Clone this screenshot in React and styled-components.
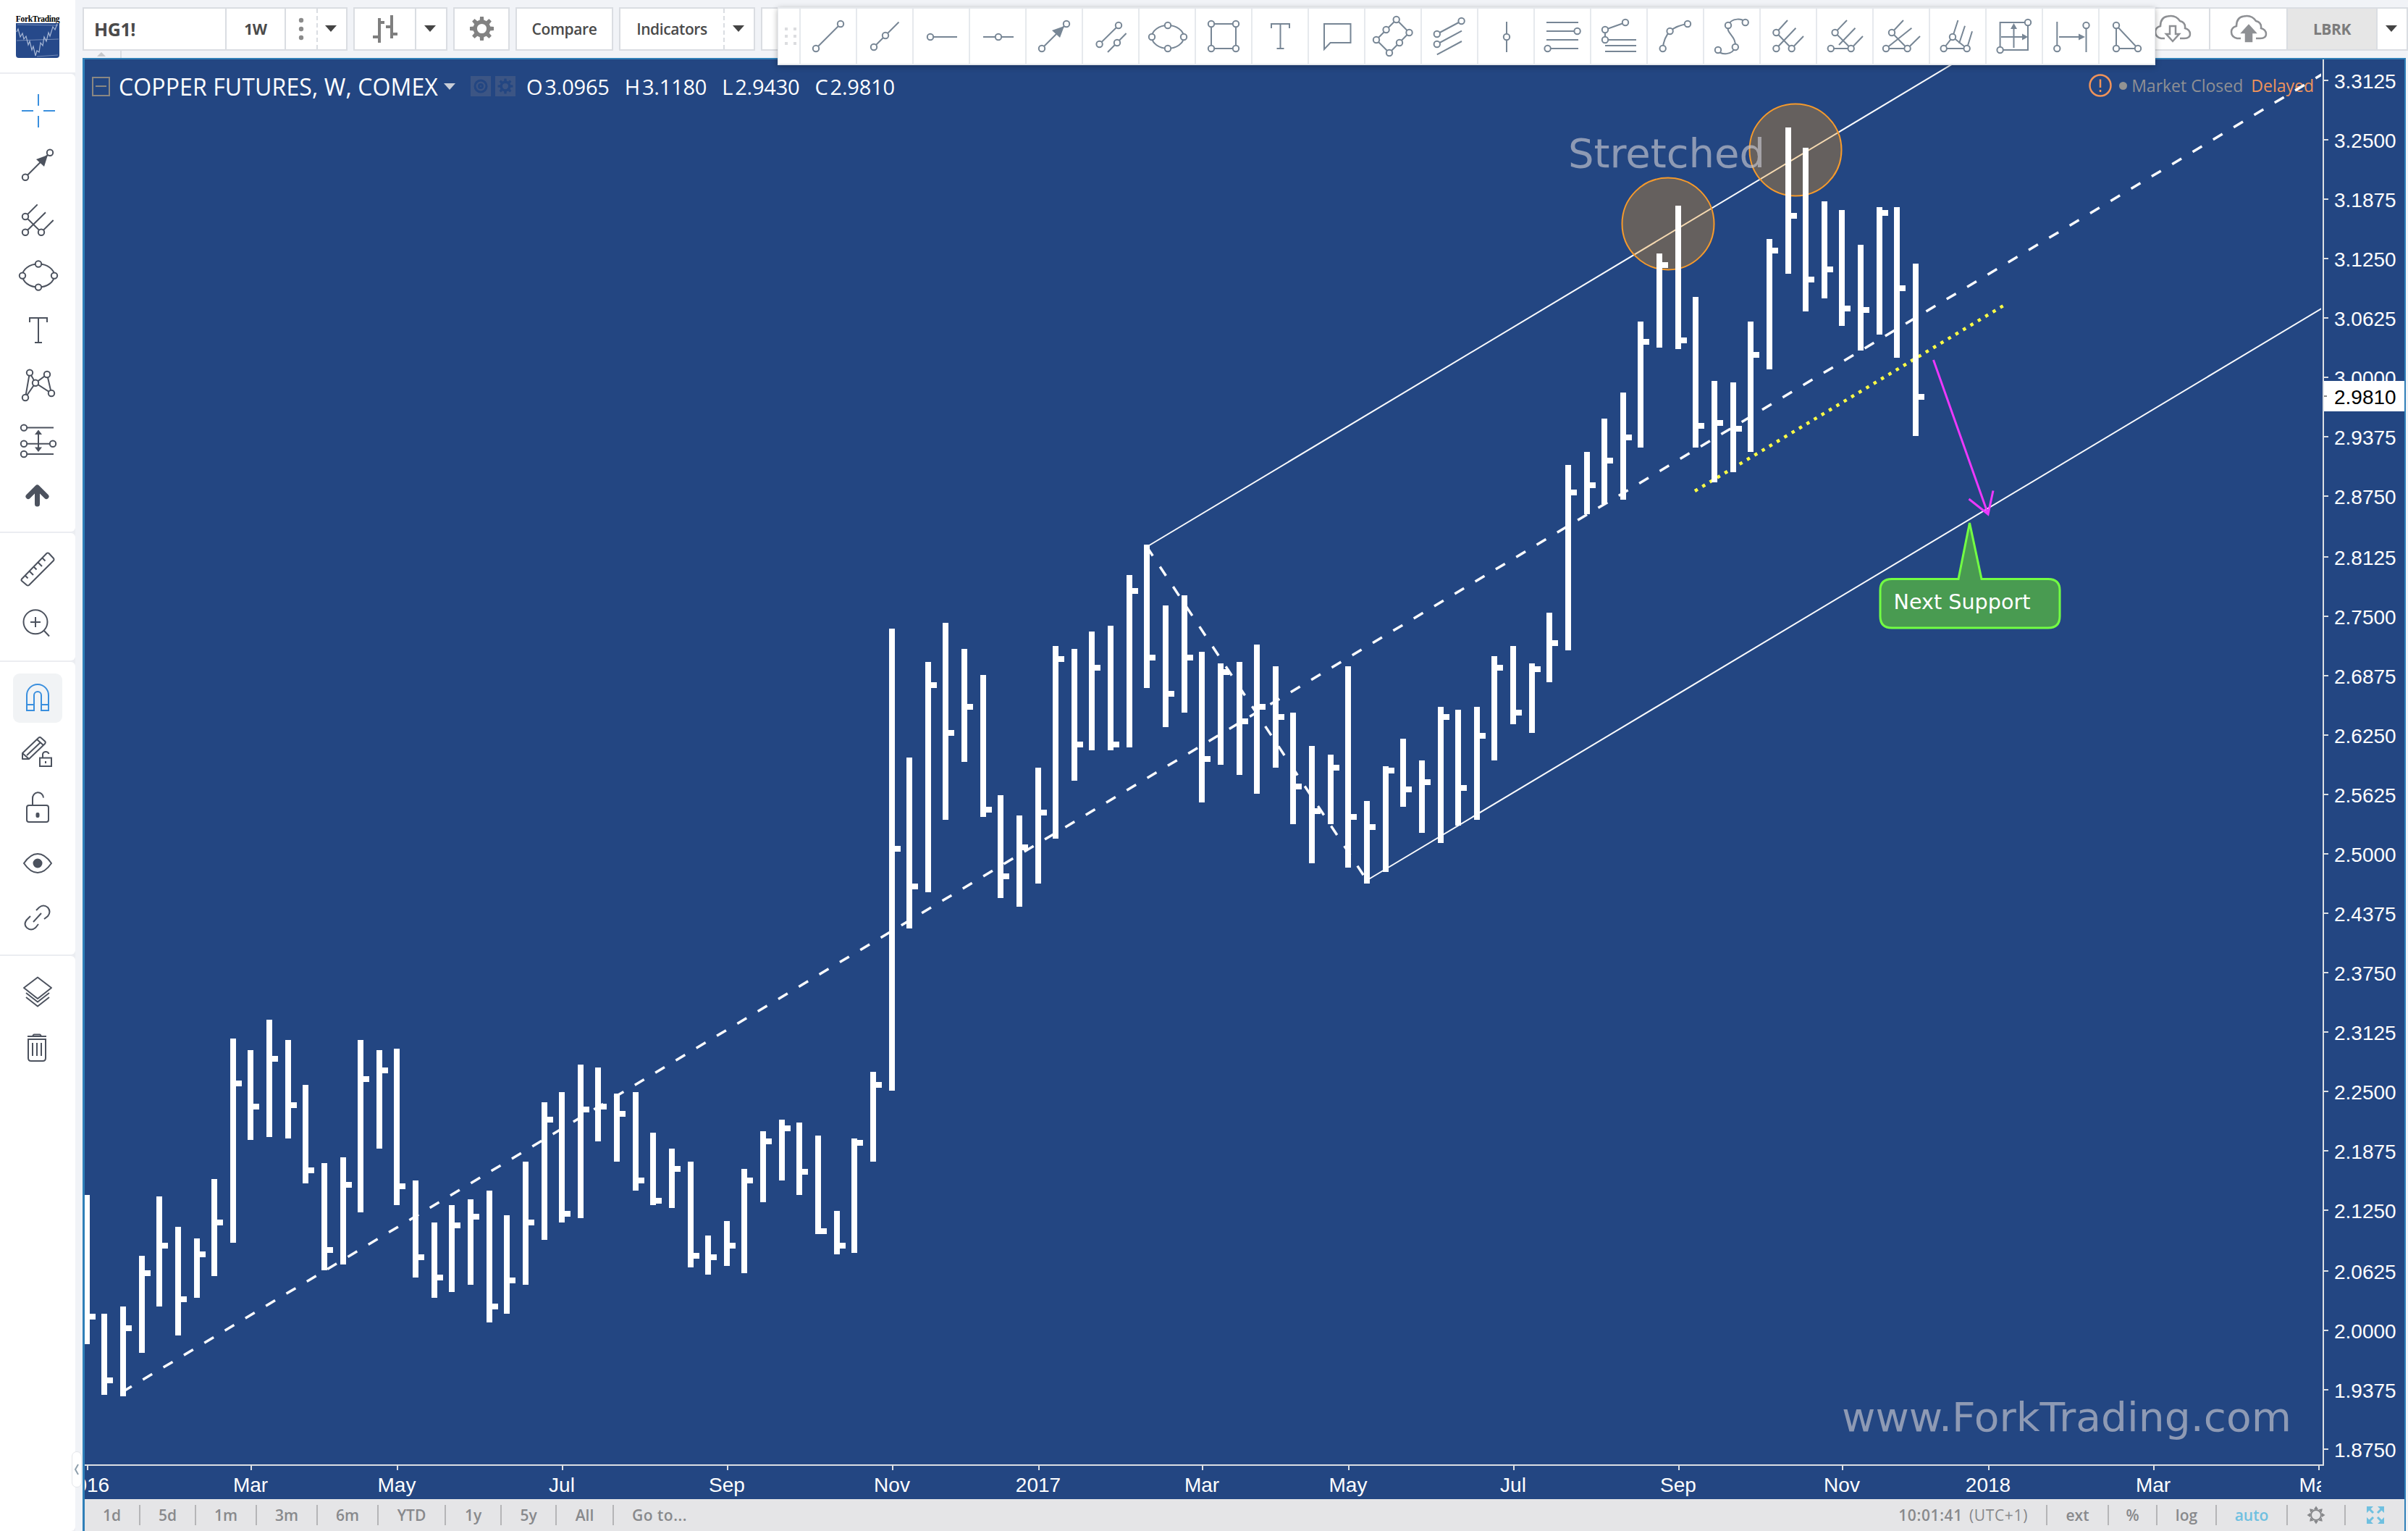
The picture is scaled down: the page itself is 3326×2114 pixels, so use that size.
import React from "react";
import styled, { createGlobalStyle } from "styled-components";

const GlobalStyle = createGlobalStyle`
  * {
    box-sizing: border-box;
  }
  body {
    margin: 0;
    background: #f1f3f7;
    font-family: "Open Sans", "Noto Sans", sans-serif;
    overflow: hidden;
  }
`;

// [top, bottom, close] of every weekly bar, in chart units
const BARS = [
  [1650, 1856, 1818], [1814, 1926, 1906], [1804, 1928, 1834], [1734, 1868, 1758],
  [1652, 1804, 1720], [1694, 1844, 1794], [1710, 1792, 1732], [1628, 1762, 1688],
  [1434, 1716, 1496], [1450, 1574, 1528], [1408, 1570, 1462], [1436, 1572, 1526],
  [1498, 1634, 1616], [1606, 1754, 1726], [1598, 1746, 1636], [1436, 1674, 1490],
  [1450, 1586, 1478], [1448, 1664, 1638], [1630, 1764, 1736], [1688, 1792, 1764],
  [1664, 1784, 1692], [1656, 1774, 1680], [1644, 1826, 1804], [1678, 1814, 1768],
  [1604, 1774, 1688], [1522, 1712, 1546], [1508, 1688, 1676], [1470, 1682, 1532],
  [1474, 1576, 1528], [1510, 1604, 1538], [1508, 1644, 1630], [1564, 1664, 1658],
  [1586, 1668, 1614], [1604, 1750, 1734], [1706, 1760, 1736], [1686, 1748, 1720],
  [1614, 1758, 1630], [1562, 1660, 1576], [1546, 1630, 1558], [1550, 1650, 1618],
  [1568, 1704, 1700], [1672, 1732, 1720], [1572, 1730, 1578], [1480, 1604, 1498],
  [868, 1506, 1172], [1046, 1282, 1224], [914, 1232, 946], [860, 1132, 1012],
  [896, 1052, 976], [932, 1128, 1118], [1098, 1240, 1210], [1126, 1252, 1170],
  [1060, 1220, 1122], [892, 1158, 910], [896, 1078, 1028], [872, 1036, 922],
  [864, 1036, 1028], [794, 1032, 816], [752, 950, 908], [836, 1004, 958],
  [822, 984, 908], [900, 1108, 1048], [916, 1056, 928], [914, 1070, 996],
  [890, 1096, 976], [920, 1060, 990], [984, 1138, 1086], [1030, 1192, 1120],
  [1042, 1138, 1060], [920, 1198, 1128], [1106, 1220, 1142], [1058, 1204, 1064],
  [1020, 1114, 1090], [1050, 1150, 1080], [976, 1164, 990], [980, 1140, 1088],
  [976, 1132, 1016], [906, 1050, 922], [892, 1000, 984], [916, 1012, 924],
  [846, 942, 888], [642, 898, 680], [624, 710, 670], [578, 696, 636],
  [542, 690, 604], [444, 618, 472], [350, 480, 366], [284, 482, 470],
  [410, 618, 588], [526, 666, 584], [528, 652, 592], [444, 624, 490],
  [330, 510, 346], [176, 378, 298], [204, 430, 386], [278, 412, 372],
  [290, 450, 426], [338, 484, 428], [286, 462, 294], [286, 494, 398],
  [364, 602, 548],
];

const MONTHS = [
  [0, "2016"], [9, "Mar"], [17, "May"], [26, "Jul"], [35, "Sep"], [44, "Nov"],
  [52, "2017"], [61, "Mar"], [69, "May"], [78, "Jul"], [87, "Sep"], [96, "Nov"],
  [104, "2018"], [113, "Mar"], [122, "May"],
];

const PRICES = Array.from({ length: 24 }, (_, i) => (3.3125 - i * 0.0625).toFixed(4));

const barX = (i) => Math.round((119.45 + i * 25.2645) / 2) * 2;
const priceY = (i) => 111 + 2 * Math.round(i * 41.085 - 0.14);

/* ---------- icons ---------- */

// stroke colour of the rings follows the parent icon
const Dots = ({ at, r = 4.2 }) =>
  at.map(([x, y]) => <circle key={`${x}-${y}`} cx={x} cy={y} r={r} fill="#fff" />);

// Drawing tools of the floating bar, each on a 76x76 grid
const FAVORITES = [
  { d: "M21 55L55 21", at: [[21, 55], [55, 21]] },
  { d: "M23 53L57.500 18.500", at: [[23, 53], [39, 37]] },
  { d: "M23 39H60", at: [[23, 39]] },
  { d: "M18 39H60", at: [[39, 39]] },
  { d: "M21 55L55 21", solid: "M52 24L35 30L46 40Z", at: [[21, 55], [55, 21]] },
  { d: "M22.600 49L49 23M34 60L59.600 34", at: [[22.6, 49], [49, 23], [47, 47]] },
  { d: "M17 39A22 16 0 0 1 61 39A22 16 0 0 1 17 39", at: [[39, 23], [17, 39], [61, 39], [39, 55]] },
  { d: "M21 21H55V55H21Z", at: [[21, 21], [55, 21], [21, 55], [55, 55]] },
  { d: "M26 27V21H51V27M38.500 21V55M33.500 55H43.500", at: [] },
  { d: "M21 21H57.500V47H29.500L21 56Z", at: [] },
  { d: "M42.700 15L15 43L33 61L60.500 33Z", at: [[42.7, 15], [28.6, 29], [60.5, 33], [15, 43], [47, 47], [33, 61]] },
  { d: "M20.800 35L54.600 17M20.800 49L55 30.700M20.800 63.300L55 45", at: [[54.6, 17], [20.8, 35], [20.8, 49]] },
  { d: "M39 18V60", at: [[39, 39]] },
  { d: "M16 19H60M16 31H58M16 43H60M18 55H60", at: [[58.6, 31], [17.6, 55]] },
  { d: "M47 19L19 29V43H62M19 51H62M19 59H62", at: [[19, 29], [47, 19], [19, 43]] },
  { d: "M20.700 55Q22 40 30.600 31Q40 23 55 21", at: [[20.7, 55], [30.6, 31], [55, 21]] },
  { d: "M56.700 19C54 13 37 12 33 23C29 34 45 38 42.800 53C39 64 23 65 19 57", at: [[56.7, 19], [33, 23], [42.8, 53], [19, 57]] },
  { d: "M37 16L21.400 33L42.700 55L59 38M21.400 55L48.400 26.700", at: [[21.4, 33], [21.4, 55], [42.7, 55]] },
  { d: "M41 16L24.600 33L46.700 55L63 38M18.800 55H46.700M30 50L52.500 26.700", at: [[24.6, 33], [18.8, 55], [46.7, 55]] },
  { d: "M41 16L25 33L46.600 55L64 38M46.600 55H17L52.400 26.700", at: [[25, 33], [17, 55], [46.6, 55]] },
  { d: "M38.400 16L31 39L18.700 55H50.700L58 31.300M31 39L50.700 55M40 48L48 23.700", at: [[31, 39], [18.7, 55], [50.7, 55]] },
  { d: "M18.600 19H57V57H18.600ZM37.500 54V24M20 39H52", solid: "M37.500 20L42 28H33ZM57 39L49 34.500V43.500Z", at: [[57, 19], [18.6, 57]] },
  { d: "M19.300 18V55M59.500 23V60M22 39H52", solid: "M58 39L49 34.500V43.500Z", at: [[19.3, 55], [59.5, 23]] },
  { d: "M23 23V55H53Z", at: [[23, 23], [23, 55], [53, 55]] },
];

const ToolIcon = ({ d, solid, at }) => (
  <svg width="76" height="76" fill="none" stroke="#778695" strokeWidth="2">
    <path d={d} />
    {solid && <path d={solid} fill="#778695" stroke="none" />}
    <Dots at={at} />
  </svg>
);

// Sidebar glyphs use the full 104x76 slot
const SIDEBAR = [
  [
    <path key="cross" stroke="#3a8fde" d="M53 15V31M53 45V61M30 38H46M60 38H76" />,
    <g key="arrow">
      <path d="M35 53.700L69 19.700" />
      <path d="M66 23L50 29L61 39Z" fill="#4c525e" stroke="none" />
      <Dots at={[[35, 53.7], [69, 19.7]]} />
    </g>,
    <g key="fork">
      <path d="M51.700 15.400L35 32L57 53.700L73.700 37M35 53.700L63 26.300" />
      <Dots at={[[35, 32], [35, 53.7], [57, 53.7]]} />
    </g>,
    <g key="ellipse">
      <ellipse cx="53" cy="37.600" rx="22" ry="16" />
      <Dots at={[[53, 21.5], [31, 37.6], [75, 37.6], [53, 53.6]]} />
    </g>,
    <path key="text" d="M41 26V20H65V26M53 20V54M48 54H58" />,
    <g key="pattern">
      <path d="M41 19.600L35 54L49 33.800L65 22L71 48L49 33.800Z" />
      <Dots at={[[41, 19.6], [65, 22], [49, 33.8], [35, 54], [71, 48]]} />
    </g>,
    <g key="forecast">
      <path d="M33 19.600H74M33 41.800H73M33 56H74M53 26V50" />
      <path d="M53 22.500L58 29H48ZM53 53L58 46.500H48Z" fill="#4c525e" stroke="none" />
      <Dots at={[[33, 19.6], [33, 41.8], [73, 41.8], [33, 56]]} />
    </g>,
    <path key="up" strokeWidth="7" strokeLinecap="round" strokeLinejoin="round" d="M39 38.500L51.500 26L64 38.500M51.500 28V49" fill="none" />,
  ],
  [
    <path key="ruler" strokeLinejoin="round" d="M30 51.500L64.500 16Q66 15 67.500 16L74 23Q75 24.500 74 26L40 60Q38.500 61 37 60L30 54Q29 53 30 51.500ZM35 47L38.500 50.500M41 41L46 46M47 35L50.500 38.500M53 29L58 34M59 23L62.500 26.500" />,
    <g key="zoom">
      <circle cx="49" cy="34.800" r="16.500" />
      <path d="M61 47L68 54.500M49 28V42M42 35H56" />
    </g>,
  ],
  [
    <g key="magnet" stroke="#3a8fde">
      <rect x="18" y="4" width="68" height="68" rx="9" fill="#f1f3f5" stroke="none" />
      <path d="M37 55V34A15 15 0 0 1 67 34V55H57V34A5 5 0 0 0 47 34V55ZM37 47H47M57 47H67" />
    </g>,
    <g key="pencil">
      <path strokeLinejoin="round" d="M31 38L53 17Q55 15 57 17L62 21.500Q63.500 23 62 25L40 46H31ZM31 38L40 46M51 19L60 27M37 41L56 23" />
      <path d="M55 44.500H71V56H55ZM59 44V39A4.500 4.500 0 0 1 67.500 39M63 49V52" />
    </g>,
    <g key="lock">
      <rect x="37" y="34" width="30" height="23" rx="3" />
      <path d="M45 34V25A7.500 8 0 0 1 60 23.500" />
      <rect x="50.500" y="45" width="3" height="5" rx="1" fill="#4c525e" />
    </g>,
    <g key="eye">
      <path d="M33 38Q42 25 52 25Q62 25 71 38Q62 51 52 51Q42 51 33 38Z" />
      <circle cx="52" cy="38" r="5.500" fill="#4c525e" />
    </g>,
    <path key="link" d="M50 27L54 23Q60 18 66 23Q71 29 66 35L61 39M42 35L37 40Q32 46 37 51Q43 56 49 51L53 46M46 43L57 31" />,
  ],
  [
    <path key="layers" strokeLinejoin="round" d="M52 17.500L71 32L52 47L33 32ZM36 39L52 51.500L68 39M36 45L52 57.500L68 45" />,
    <path key="trash" d="M38 23H64M39 27H63V53Q63 57 59 57H43Q39 57 39 53ZM45 32V50M51 32V50M57 32V50M45 22L47 20.500H55L57 22" />,
  ],
];

const Gear = ({ size, color }) => (
  <svg width={size} height={size} viewBox="-18 -18 36 36" fill="none" stroke={color}>
    <circle r="9.500" strokeWidth="5.500" />
    {[0, 45, 90, 135, 180, 225, 270, 315].map((a) => (
      <path key={a} d="M-3 -11.500L-2.500 -17H2.500L3 -11.500Z" fill={color} stroke="none" transform={`rotate(${a})`} />
    ))}
  </svg>
);

const Sun = () => (
  <svg width="26" height="26" viewBox="-13 -13 26 26" fill="none" stroke="#86878a" strokeWidth="2">
    <circle r="7" />
    {[0, 45, 90, 135, 180, 225, 270, 315].map((a) => (
      <path key={a} d="M-3 -8L0 -12.500L3 -8Z" fill="#86878a" stroke="none" transform={`rotate(${a})`} />
    ))}
  </svg>
);

const Cloud = ({ up }) => (
  <svg width="52" height="40" fill="none" stroke="#8e9094" strokeWidth="2.500">
    <path d="M15 33H10Q2 31 2 24Q2 18 9 16Q9 4 19 2.500Q30 0 36 9Q44 11 43 19Q50 21 50 27Q50 33 42 33H36" />
    {up ? (
      <path d="M26 15L35 25H30V37H22V25H17Z" fill="#8e9094" />
    ) : (
      <path d="M22 16H30V27H35L26 37L17 27H22Z" />
    )}
  </svg>
);

const Caret = styled.i`
  width: 0;
  height: 0;
  margin-right: 3px;
  border: 8px solid transparent;
  border-top: 9px solid ${({ color }) => color || "#444"};
  border-bottom: 0;
`;

/* ---------- chart ---------- */

const Chart = () => (
  <Plot viewBox="117 82 3204 1988">
    <defs>
      <clipPath id="pane">
        <rect x="117" y="82" width="3089" height="1988" />
      </clipPath>
    </defs>

    <g clipPath="url(#pane)">
      <g stroke="#fafbfd" strokeWidth="2" fill="none">
        <path d="M1584 755L2714 78" />
        <path d="M1888 1215.500L3210 424" />
        <path d="M169 1922L3210 101" strokeWidth="3.500" strokeDasharray="15 18" />
        <path d="M1584 755L1888 1215.500" strokeWidth="3.500" strokeDasharray="15 18" />
      </g>
      <path d="M2341 678L2768 421.500" stroke="#ffff45" strokeWidth="4.500" strokeDasharray="4.500 7.500" />
      <g fill="rgba(236, 150, 20, 0.33)" stroke="#f59a2c" strokeWidth="2">
        <circle cx="2304" cy="309" r="63.500" />
        <circle cx="2480" cy="207" r="63.500" />
      </g>
      <g fill="#fff" shapeRendering="crispEdges">
        {BARS.map(([top, bottom, close], i) => (
          <path
            key={i}
            d={`M${barX(i) - 4} ${top}h8V${bottom}h-8ZM${barX(i) + 4} ${close - 4}h8v8h-8Z`}
          />
        ))}
      </g>
      <path d="M2670.500 497L2746 710M2719.500 689L2746 710L2753 677.500" fill="none" stroke="#ec38fb" strokeWidth="3" />
      <ChartNote x="2166" y="231" textLength="272" lengthAdjust="spacingAndGlyphs">
        Stretched
      </ChartNote>
      <ChartNote x="2544" y="1976" textLength="621" lengthAdjust="spacingAndGlyphs">
        www.ForkTrading.com
      </ChartNote>
      <path
        d="M2705 799.500L2720.500 722L2737 799.500H2829Q2845 799.500 2845 815V851Q2845 867 2829 867H2613Q2597 867 2597 851V815Q2597 799.500 2613 799.500Z"
        fill="#499b51"
        stroke="#73ff43"
        strokeWidth="3"
      />
      <CalloutText x="2615.500" y="841" textLength="189" lengthAdjust="spacingAndGlyphs">
        Next Support
      </CalloutText>

      {MONTHS.map(([i, label]) => (
        <AxisText key={i} x={barX(i)} y="2060" textAnchor="middle">
          {label}
        </AxisText>
      ))}
    </g>

    <g fill="#dcdfe3" shapeRendering="crispEdges">
      <rect x="117" y="2022" width="3093" height="2" />
      <rect x="3208" y="82" width="2" height="1942" />
      {MONTHS.map(([i]) => (
        <rect key={i} x={barX(i)} y="2024" width="2" height="6" />
      ))}
      {PRICES.map((p, i) => (
        <rect key={p} x="3210" y={priceY(i) - 1} width="6" height="2" />
      ))}
    </g>
    {PRICES.map((p, i) => (
      <AxisText key={p} x="3224" y={priceY(i) + 11}>
        {p}
      </AxisText>
    ))}
    <rect x="3210" y="526" width="111" height="42" fill="#fff" />
    <rect x="3210" y="546" width="4" height="2" fill="#888" />
    <AxisText x="3224" y="558" $dark>
      2.9810
    </AxisText>
  </Plot>
);

const Legend = () => (
  <LegendRow>
    <svg width="25" height="27" fill="none" stroke="#8a8782" strokeWidth="2">
      <path d="M1 1H24V26H1ZM5 13H20" />
    </svg>
    <Symbol>COPPER FUTURES, W, COMEX</Symbol>
    <Caret color="#c9ced8" />
    <SeriesButtons>
      <SeriesButton>
        <svg width="20" height="20" fill="none" stroke="#234682" strokeWidth="3">
          <circle cx="10" cy="10" r="8" />
          <circle cx="10" cy="10" r="2.500" />
        </svg>
      </SeriesButton>
      <SeriesButton>
        <Gear size={22} color="#234682" />
      </SeriesButton>
    </SeriesButtons>
    <Values>
      {["O3.0965", "H3.1180", "L2.9430", "C2.9810"].map((v) => (
        <Value key={v}>
          <b>{v[0]}</b>
          {v.slice(1)}
        </Value>
      ))}
    </Values>
  </LegendRow>
);

const RANGES = [
  ["1d", 77], ["5d", 77], ["1m", 84], ["3m", 84], ["6m", 84],
  ["YTD", 93], ["1y", 77], ["5y", 76], ["All", 79],
];

const App = () => (
  <Page>
    <GlobalStyle />
    <Sidebar>
      <Logo>
        <LogoName>ForkTrading</LogoName>
        <LogoPicture>
          <svg width="60" height="48" fill="none" stroke="#a9b9d6" strokeWidth="1.200">
            <path d="M1 12L3 8L6 19L9 14L11 22L14 18L17 30L19 25L22 37L24 32L27 45L29 38L32 40L34 27L37 31L39 19L42 25L45 13L47 18L51 5L54 9L57 1" />
            <path d="M1 24L59 22M2 2L58 3M29 46L58 44" strokeWidth="0.600" />
          </svg>
        </LogoPicture>
      </Logo>
      {SIDEBAR.map((group, g) => (
        <SideGroup key={g} $last={g === SIDEBAR.length - 1}>
          {group.map((glyph) => (
            <SideButton key={glyph.key}>
              <svg width="104" height="76" fill="none" stroke="#4c525e" strokeWidth="2">
                {glyph}
              </svg>
            </SideButton>
          ))}
        </SideGroup>
      ))}
      <CollapseTab>
        <svg width="8" height="18" fill="none" stroke="#8fa0ad" strokeWidth="2">
          <path d="M6 2L2 9L6 16" />
        </svg>
      </CollapseTab>
    </Sidebar>

    <Main>
      <Header>
        <Group>
          <Cell $w={197} $left={14} $size={25} $bold>HG1!</Cell>
          <Cell $w={82} $bold>1W</Cell>
          <Cell $w={44} $dashed>
            <svg width="8" height="32" fill="#8b8b8b">
              <circle cx="4" cy="4" r="3.200" />
              <circle cx="4" cy="16" r="3.200" />
              <circle cx="4" cy="28" r="3.200" />
            </svg>
          </Cell>
          <Cell $w={39}><Caret /></Cell>
        </Group>
        <Group>
          <Cell $w={85}>
            <svg width="34" height="38" fill="none" stroke="#7f7f7f" strokeWidth="4">
              <path d="M9 4V38M0 30H9M9 10H16M26 0V32M18 16H26M26 26H34" />
            </svg>
          </Cell>
          <Cell $w={41}><Caret /></Cell>
        </Group>
        <Group>
          <Cell $w={74}><Gear size={35} color="#828282" /></Cell>
        </Group>
        <Group>
          <Cell $w={131}>Compare</Cell>
        </Group>
        <Group>
          <Cell $w={144} $dashed>Indicators</Cell>
          <Cell $w={40}><Caret /></Cell>
        </Group>
        <Group>
          <Cell $w={130} />
        </Group>
        <Group $right>
          <Cell $w={102}><Cloud /></Cell>
          <Cell $w={107}><Cloud up /></Cell>
          <Cell $w={124} $muted $bold>LBRK</Cell>
          <Cell $w={40}><Caret /></Cell>
        </Group>
      </Header>
      <HeaderFoot>
        <FootTab />
      </HeaderFoot>

      <Frame>
        <Pane>
          <Legend />
          <MarketStatus>
            <svg width="34" height="34" fill="none" stroke="#f0935a" strokeWidth="2.500">
              <circle cx="17" cy="17" r="14.500" />
              <path d="M17 8.500V20M17 23V26" />
            </svg>
            <StatusDot />
            <span>Market Closed</span>
            <Delayed>Delayed</Delayed>
          </MarketStatus>
          <Chart />
        </Pane>
        <Footer>
          {RANGES.map(([label, w]) => (
            <FootCell key={label} $w={w}>{label}</FootCell>
          ))}
          <GoTo>Go to...</GoTo>
          <Clock>
            10:01:41 <span>(UTC+1)</span>
          </Clock>
          <FootCell $w={85}>ext</FootCell>
          <FootCell $w={67}>%</FootCell>
          <FootCell $w={82}>log</FootCell>
          <FootCell $w={98} $on>auto</FootCell>
          <FootCell $w={80}><Sun /></FootCell>
          <FootCell $w={81} $plain>
            <svg width="24" height="24" fill="#6fc0e0" stroke="#6fc0e0" strokeWidth="3">
              <path d="M3 3L9 9M21 3L15 9M3 21L9 15M21 21L15 15" />
              <path d="M0 0H9L0 9ZM24 0V9L15 0ZM0 24V15L9 24ZM24 24H15L24 15Z" stroke="none" />
            </svg>
          </FootCell>
        </Footer>
      </Frame>
    </Main>

    <Favorites>
      <Grip>
        {[0, 1, 2, 3, 4, 5].map((i) => (
          <i key={i} />
        ))}
      </Grip>
      {FAVORITES.map((icon, i) => (
        <Tool key={i}>
          <ToolIcon {...icon} />
        </Tool>
      ))}
    </Favorites>
  </Page>
);

export default App;

const Page = styled.div`
  position: relative;
  display: flex;
  width: 3326px;
  height: 2114px;
  overflow: hidden;
  background: #f1f3f7;
`;

const Sidebar = styled.aside`
  position: relative;
  display: flex;
  flex-direction: column;
  gap: 2px;
  width: 104px;
  margin-right: 10px;
  background: #ebedf1;
`;

const Logo = styled.div`
  display: flex;
  flex-direction: column;
  align-items: center;
  height: 100px;
  padding-top: 20px;
  background: #fff;
`;

const LogoName = styled.div`
  height: 12px;
  font: bold 11.5px/12px "Liberation Serif", serif;
  letter-spacing: -0.3px;
  color: #000;
`;

const LogoPicture = styled.div`
  width: 60px;
  height: 48px;
  border-radius: 0 0 4px 4px;
  background: #26498a;
`;

const SideGroup = styled.div`
  flex: ${({ $last }) => ($last ? "1" : "none")};
  padding: 12px 0;
  border-radius: 0 6px 6px 0;
  background: #fff;

  &:nth-child(2) {
    padding: 13px 0 11px;
  }
`;

const SideButton = styled.div`
  width: 104px;
  height: 76px;

  svg {
    display: block;
  }
`;

const CollapseTab = styled.div`
  position: absolute;
  left: 99px;
  top: 2004px;
  display: flex;
  align-items: center;
  justify-content: center;
  width: 14px;
  height: 50px;
  border: 1px solid #e3e6ea;
  border-radius: 7px;
  background: #fff;
`;

const Main = styled.div`
  display: flex;
  flex-direction: column;
  width: 3212px;
`;

const Header = styled.header`
  display: flex;
  gap: 8px;
  height: 70px;
  padding-top: 10px;
`;

const Group = styled.div`
  display: flex;
  flex: none;
  height: 60px;
  margin-left: ${({ $right }) => ($right ? "auto" : "0")};
  border: 2px solid #dadde2;
  background: #fff;
`;

const Cell = styled.div`
  display: flex;
  align-items: center;
  justify-content: ${({ $left }) => ($left ? "flex-start" : "center")};
  width: ${({ $w }) => $w}px;
  padding-left: ${({ $left }) => $left || 0}px;
  padding-bottom: 1px;
  border-right: 2px ${({ $dashed }) => ($dashed ? "dashed" : "solid")} #dadde2;
  background: ${({ $muted }) => ($muted ? "#e6e6e6" : "#fff")};
  color: ${({ $muted }) => ($muted ? "#7c7c7c" : "#4a4a4a")};
  font-size: ${({ $size }) => $size || 21}px;
  font-weight: ${({ $bold }) => ($bold ? 700 : 600)};
  letter-spacing: -0.4px;

  &:last-child {
    border-right: 0;
  }
`;

const HeaderFoot = styled.div`
  height: 10px;
`;

const FootTab = styled.div`
  display: flex;
  align-items: center;
  justify-content: center;
  width: 54px;
  height: 10px;
  border-right: 2px solid #dadde2;

  &::before {
    content: "";
    border: 6px solid transparent;
    border-bottom: 6px solid #c5c8cc;
    border-top: 0;
  }
`;

const Frame = styled.div`
  width: 3209px;
  height: 2034px;
  border: solid #2f7fb8;
  border-width: 2px 2px 0 3px;
`;

const Pane = styled.div`
  position: relative;
  height: 1988px;
  background: #234682;
`;

const Plot = styled.svg`
  position: absolute;
  left: 0;
  top: 0;
  width: 3204px;
  height: 1988px;
`;

const ChartNote = styled.text`
  font-family: "DejaVu Sans", sans-serif;
  font-size: 55px;
  fill: rgba(200, 200, 208, 0.65);
`;

const CalloutText = styled.text`
  font-family: "DejaVu Sans", sans-serif;
  font-size: 28px;
  fill: #fff;
`;

const AxisText = styled.text`
  font-family: "Liberation Sans", Arial, sans-serif;
  font-size: 28px;
  fill: ${({ $dark }) => ($dark ? "#000" : "#fff")};
`;

const LegendRow = styled.div`
  position: absolute;
  left: 10px;
  top: 13px;
  display: flex;
  align-items: center;
  height: 48px;
  color: #fff;
`;

const Symbol = styled.span`
  width: 448px;
  margin: 0 1px 0 12px;
  font-size: 32px;
  letter-spacing: 0.12px;
  white-space: nowrap;
`;

const SeriesButtons = styled.div`
  display: flex;
  gap: 6px;
  margin-left: 18px;
`;

const SeriesButton = styled.div`
  display: flex;
  align-items: center;
  justify-content: center;
  width: 28px;
  height: 28px;
  background: #3c5584;
`;

const Values = styled.div`
  display: flex;
  gap: 21px;
  margin-left: 15px;
`;

const Value = styled.span`
  font-size: 29px;
  letter-spacing: -0.2px;

  b {
    margin-right: 3px;
    font-weight: 400;
  }
`;

const MarketStatus = styled.div`
  position: absolute;
  right: 125px;
  top: 19px;
  display: flex;
  align-items: center;
  height: 34px;
  color: #8f9094;
  font-size: 23px;
  white-space: nowrap;
`;

const StatusDot = styled.i`
  width: 11px;
  height: 11px;
  margin: 0 6px 0 9px;
  border-radius: 50%;
  background: #939393;
`;

const Delayed = styled.span`
  margin-left: 11px;
  color: #f0935a;
`;

const Footer = styled.footer`
  display: flex;
  align-items: center;
  height: 44px;
  background: #e5e5e7;
  color: #88898c;
  font-size: 21px;
  font-weight: 600;
`;

const FootCell = styled.div`
  display: flex;
  align-items: center;
  justify-content: center;
  width: ${({ $w }) => $w}px;
  height: 28px;
  border-right: ${({ $plain }) => ($plain ? "0" : "2px solid #b5b5b7")};
  color: ${({ $on }) => ($on ? "#6fc0e0" : "inherit")};
`;

const GoTo = styled.div`
  padding-left: 25px;
  letter-spacing: 0.5px;
`;

const Clock = styled.div`
  display: flex;
  align-items: center;
  gap: 9px;
  height: 28px;
  margin-left: auto;
  padding-right: 25px;
  border-right: 2px solid #b5b5b7;
  letter-spacing: 0.65px;

  span {
    font-weight: 400;
  }
`;

const Favorites = styled.div`
  position: absolute;
  left: 1074px;
  top: 10px;
  display: flex;
  height: 80px;
  border: solid #e6e9ed;
  border-width: 2px 1px 2px 1px;
  background: #fff;
  box-shadow: 0 2px 8px rgba(0, 0, 0, 0.3);
`;

const Grip = styled.div`
  display: grid;
  grid-template-columns: 4px 4px;
  grid-auto-rows: 4px;
  gap: 6px 8px;
  width: 29px;
  padding: 26px 0 0 9px;

  i {
    background: #dcdde0;
  }
`;

const Tool = styled.div`
  width: 78px;
  height: 76px;
  border-left: 2px solid #e6e9ed;

  svg {
    display: block;
  }
`;
